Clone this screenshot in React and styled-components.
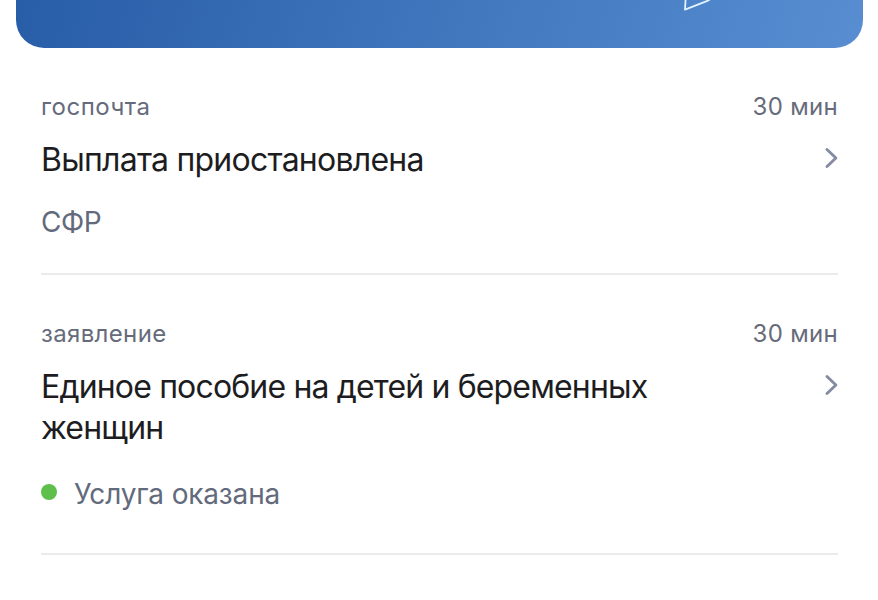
import React from "react";
import styled, { createGlobalStyle } from "styled-components";

export default function App() {
  return (
    <>
      <GlobalStyle />
      <Screen>
        <Banner>
          <PlaneIcon width="30" height="12" viewBox="0 0 30 12" fill="none">
            <path d="M2.8 -4L2 9.6L25 0.6L34 -5" stroke="#e2f3ff" strokeWidth="1.8" strokeLinejoin="round" />
          </PlaneIcon>
        </Banner>
        <Feed>
          <FeedItem
            category="госпочта"
            categorySpacing="0.5px"
            time="30 мин"
            title={["Выплата приостановлена"]}
            titleSpacing="-0.76px"
            footer={<Source>СФР</Source>}
            footerGap={24}
            bottom={33}
          />
          <FeedItem
            category="заявление"
            categorySpacing="0.35px"
            time="30 мин"
            title={["Единое пособие на детей и беременных", "женщин"]}
            titleSpacing="-0.84px"
            footer={
              <Status>
                <Dot />
                Услуга оказана
              </Status>
            }
            footerGap={28}
            bottom={41}
          />
        </Feed>
      </Screen>
    </>
  );
}

function FeedItem({ category, categorySpacing, time, title, titleSpacing, footer, footerGap, bottom }) {
  return (
    <Item $bottom={bottom}>
      <Meta>
        <Label $spacing={categorySpacing}>{category}</Label>
        <Label $spacing="0.3px">{time}</Label>
      </Meta>
      <TitleRow>
        <Title $spacing={titleSpacing}>
          {title.map((line) => (
            <TitleLine key={line}>{line}</TitleLine>
          ))}
        </Title>
        <Chevron width="16" height="24" viewBox="0 0 16 24" fill="none">
          <path d="M5 3.5L13.9 12L5 20.5" stroke="#848ba2" strokeWidth="2.9" strokeLinecap="round" strokeLinejoin="round" />
        </Chevron>
      </TitleRow>
      <Footer $gap={footerGap}>{footer}</Footer>
    </Item>
  );
}

const GlobalStyle = createGlobalStyle`
  body {
    margin: 0;
    background: #fff;
    font-family: Inter, "Liberation Sans", sans-serif;
  }
`;
const Screen = styled.main`
  width: 878px;
  height: 600px;
  overflow: hidden;
  background: #fff;
`;
const Banner = styled.div`
  box-sizing: border-box;
  height: 47.5px;
  margin: 0 15.5px 0 16.4px;
  padding-left: 666.6px;
  border-radius: 0 0 28px 28px;
  background: linear-gradient(108deg, #285da7 0%, #4a81c6 72%, #588dd1 100%);
`;
const PlaneIcon = styled.svg`
  display: block;
`;
const Feed = styled.div`
  padding: 0 40px 0 41px;
`;
const Item = styled.article`
  padding: 43px 0 ${(props) => props.$bottom}px;
  border-bottom: 2px solid #ebebed;
  &:first-child {
    padding-top: 43.5px;
  }
  &:last-child {
    padding-top: 42.5px;
  }
`;
const Meta = styled.div`
  display: flex;
  justify-content: space-between;
`;
const Label = styled.span`
  font-size: 24px;
  line-height: 32px;
  letter-spacing: ${(props) => props.$spacing};
  color: #666b7c;
`;
const TitleRow = styled.div`
  display: flex;
  align-items: flex-start;
  justify-content: space-between;
  margin-top: 16px;
`;
const Title = styled.h2`
  margin: 0;
  font-size: 32px;
  font-weight: 400;
  line-height: 41px;
  letter-spacing: ${(props) => props.$spacing};
  color: #1d1d1f;
`;
const TitleLine = styled.span`
  display: block;
  white-space: nowrap;
`;
const Chevron = styled.svg`
  flex: none;
  margin-top: 7px;
`;
const Footer = styled.div`
  margin-top: ${(props) => props.$gap}px;
  font-size: 28px;
  line-height: 36px;
  color: #626a7c;
`;
const Source = styled.div`
  letter-spacing: -0.5px;
`;
const Status = styled.div`
  display: flex;
  align-items: center;
  letter-spacing: -0.15px;
`;
const Dot = styled.span`
  width: 16px;
  height: 16px;
  margin: -3px 17px 0 0;
  border-radius: 50%;
  background: #5ebf4b;
`;
